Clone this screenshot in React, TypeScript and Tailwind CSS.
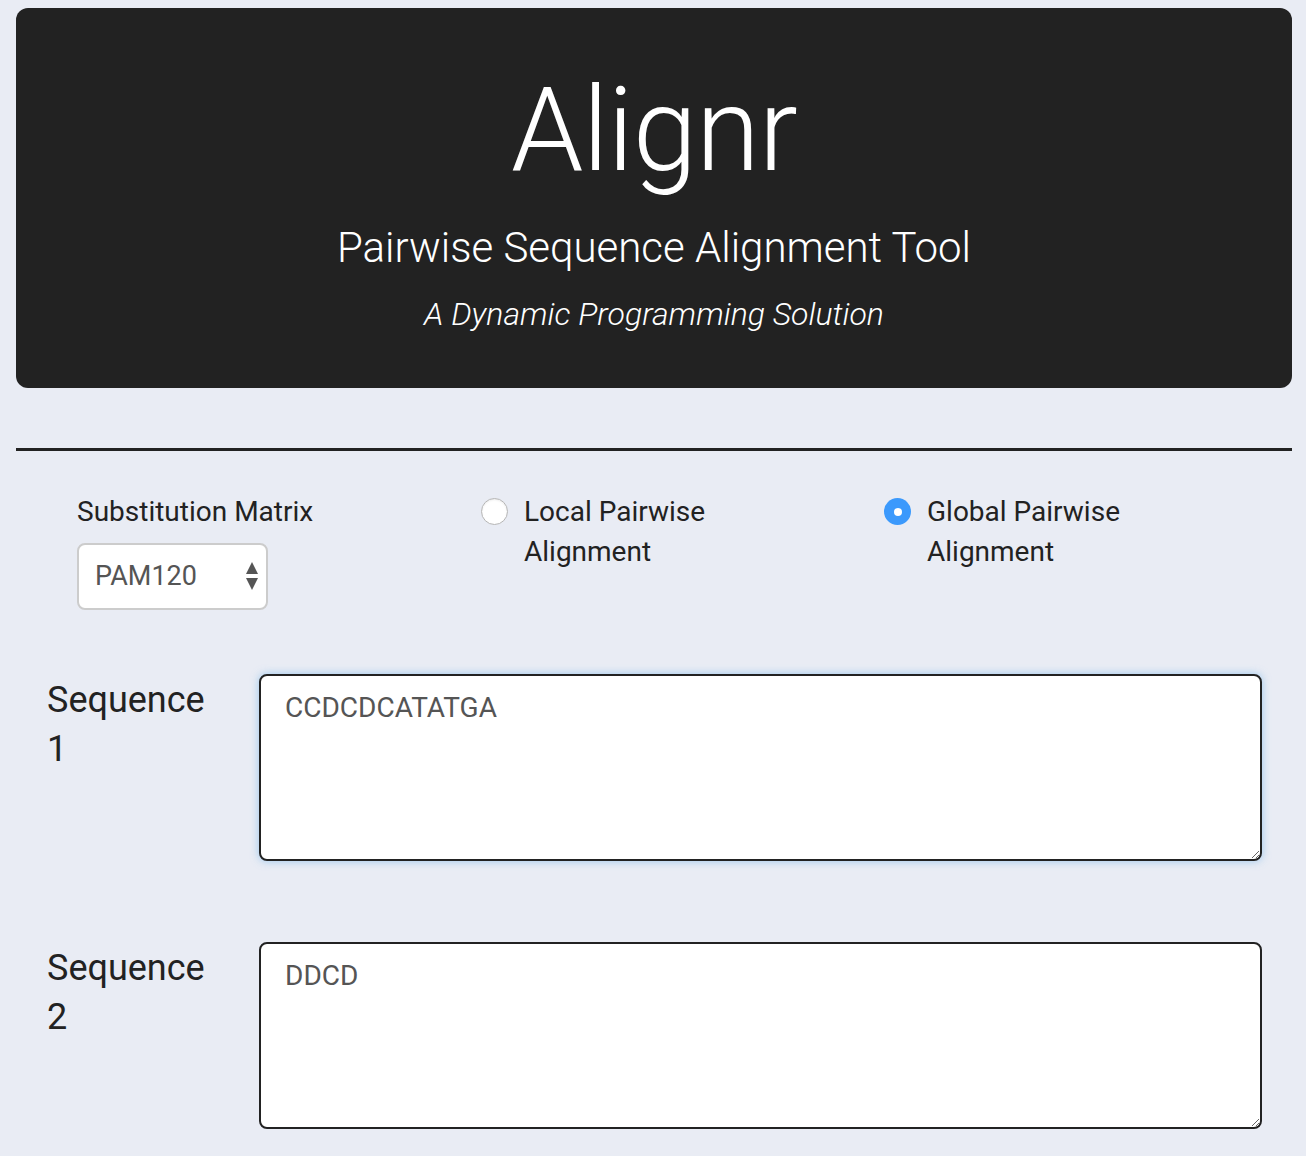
import { useState } from 'react';

const font = { fontFamily: 'Roboto, "Open Sans", sans-serif' };

function Radio({ checked, label, onClick }: { checked: boolean; label: string; onClick: () => void }) {
  return (
    <label className="flex cursor-pointer items-start gap-[16px]" onClick={onClick}>
      {checked ? (
        <span className="mt-[6px] flex h-[27px] w-[27px] shrink-0 items-center justify-center rounded-full bg-[#3b99fc]">
          <span className="h-[8px] w-[8px] rounded-full bg-white" />
        </span>
      ) : (
        <span className="mt-[6px] h-[27px] w-[27px] shrink-0 rounded-full border border-[#b5b5b5] bg-white shadow-[inset_0_1px_2px_rgba(0,0,0,0.08)]" />
      )}
      <span className="w-[220px] text-[28px] leading-[40px] text-[#222]">{label}</span>
    </label>
  );
}

function SequenceRow({ n, value, focused }: { n: number; value: string; focused?: boolean }) {
  const [text, setText] = useState(value);
  return (
    <div className="flex items-start">
      <div className="w-[243px] shrink-0 pl-[31px] pt-[2px] text-[36px] leading-[49px] text-[#222]">
        Sequence
        <br />
        {n}
      </div>
      <textarea
        value={text}
        onChange={(e) => setText(e.target.value)}
        className={
          'h-[187px] w-[1003px] resize-y rounded-[8px] border-2 border-[#222] bg-white px-[24px] pt-[16px] text-[28px] leading-[32px] text-[#555] outline-none ' +
          (focused ? 'shadow-[0_0_8px_rgba(102,175,233,0.6)]' : '')
        }
        style={font}
      />
    </div>
  );
}

export default function App() {
  const [mode, setMode] = useState<'local' | 'global'>('global');

  return (
    <div className="min-h-[1156px] bg-[#e9ecf4] pl-[16px] pr-[14px] pt-[8px]" style={font}>
      <header className="flex h-[380px] flex-col items-center rounded-[12px] bg-[#222] text-white">
        <h1 className="mt-[52px] text-[116px] font-light leading-[140px] tracking-[-1px]">Alignr</h1>
        <h2 className="mt-[22px] text-[42px] font-light leading-[52px]">Pairwise Sequence Alignment Tool</h2>
        <p className="mt-[20px] text-[32px] font-light italic leading-[40px]">A Dynamic Programming Solution</p>
      </header>

      <hr className="mt-[60px] border-t-[3px] border-[#222]" />

      <div className="mt-[41px] grid grid-cols-[404px_403px_404px] pl-[61px]">
        <div>
          <div className="text-[28px] leading-[40px] text-[#222]">Substitution Matrix</div>
          <div className="relative mt-[11px] w-[191px]">
            <select
              className="h-[67px] w-full appearance-none rounded-[8px] border-2 border-[#ccc] bg-white pl-[16px] text-[27px] text-[#555] outline-none"
              style={font}
              defaultValue="PAM120"
            >
              <option>PAM120</option>
              <option>PAM250</option>
              <option>BLOSUM62</option>
            </select>
            <svg className="pointer-events-none absolute right-[9px] top-[18px]" width="14" height="30" viewBox="0 0 14 30">
              <path d="M7 1 L13 13 L1 13 Z" fill="#555" />
              <path d="M1 17 L13 17 L7 29 Z" fill="#555" />
            </svg>
          </div>
        </div>
        <Radio checked={mode === 'local'} label="Local Pairwise Alignment" onClick={() => setMode('local')} />
        <Radio checked={mode === 'global'} label="Global Pairwise Alignment" onClick={() => setMode('global')} />
      </div>

      <div className="mt-[64px] flex flex-col gap-[81px]">
        <SequenceRow n={1} value="CCDCDCATATGA" focused />
        <SequenceRow n={2} value="DDCD" />
      </div>
    </div>
  );
}
